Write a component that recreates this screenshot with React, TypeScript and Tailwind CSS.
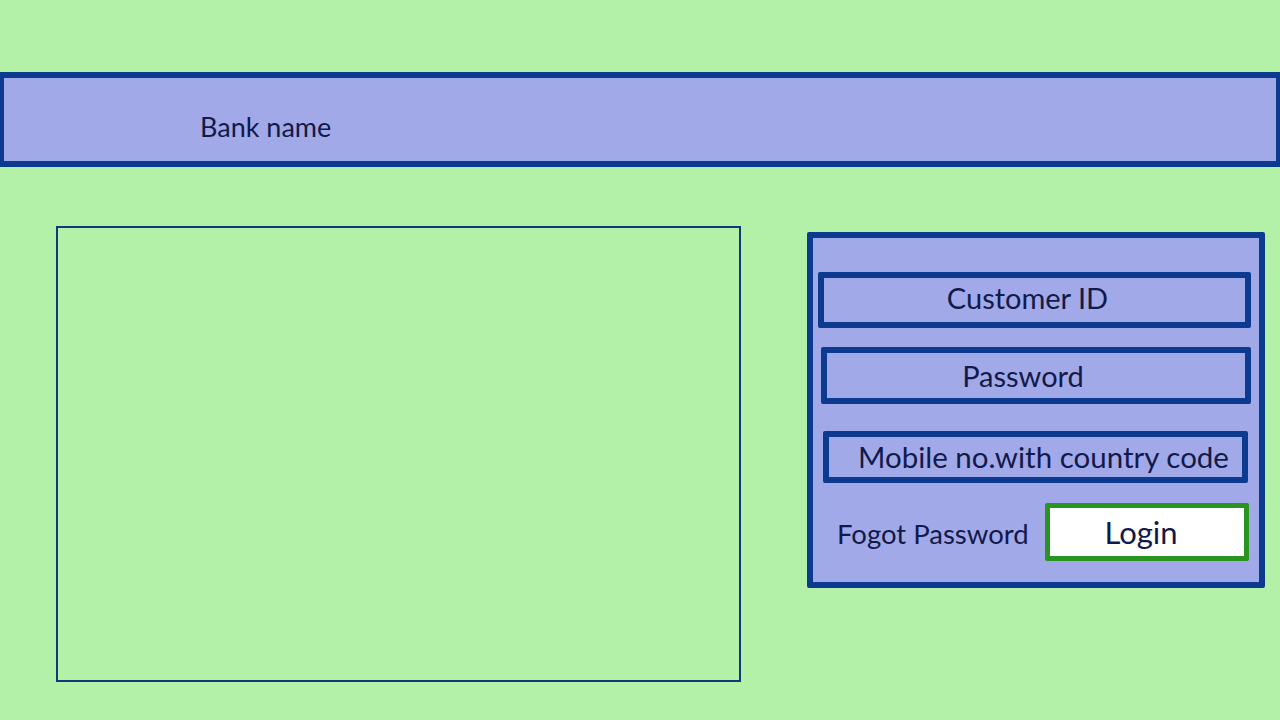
export default function App() {
  const font = { fontFamily: 'Lato, "Open Sans", sans-serif' };
  return (
    <div className="min-h-[720px] w-[1280px] bg-[#b3f0a8] pt-[72px] text-[#111a4a]" style={font}>
      <header className="flex h-[95px] items-center border-x-4 border-y-[6px] border-[#0b3a8e] bg-[#a2a9e8] pl-[196px] pt-[16px]">
        <span className="text-[27px]">Bank name</span>
      </header>

      <div className="flex items-start">
        <div className="ml-[56px] mt-[59px] h-[456px] w-[685px] border-2 border-[#0d3b7a]" />

        <div className="ml-[66px] mt-[65px] flex h-[356px] w-[458px] flex-col rounded-[2px] border-[6px] border-[#0b3a8e] bg-[#a2a9e8]">
          <div className="ml-[5px] mt-[34px] flex h-[56px] w-[433px] items-center justify-center rounded-[2px] border-[6px] border-[#0b3a8e] pb-[4px] pr-[14px] text-[29px]">
            Customer ID
          </div>
          <div className="ml-[8px] mt-[19px] flex h-[57px] w-[430px] items-center justify-center rounded-[2px] border-[6px] border-[#0b3a8e] pr-[26px] text-[29px]">
            Password
          </div>
          <div className="ml-[10px] mt-[27px] flex h-[52px] w-[425px] items-center rounded-[2px] border-[6px] border-[#0b3a8e] pl-[29px] text-[29.5px]">
            Mobile no.with country code
          </div>
          <div className="mt-[20px] flex items-center">
            <span className="ml-[24px] pt-[4px] text-[27.5px]">Fogot Password</span>
            <button className="ml-auto mr-[10px] flex h-[58px] w-[204px] items-center justify-center rounded-[2px] border-[5px] border-[#2a9420] bg-white pr-[12px] text-[31px] text-[#111a4a]">
              Login
            </button>
          </div>
        </div>
      </div>
    </div>
  );
}
